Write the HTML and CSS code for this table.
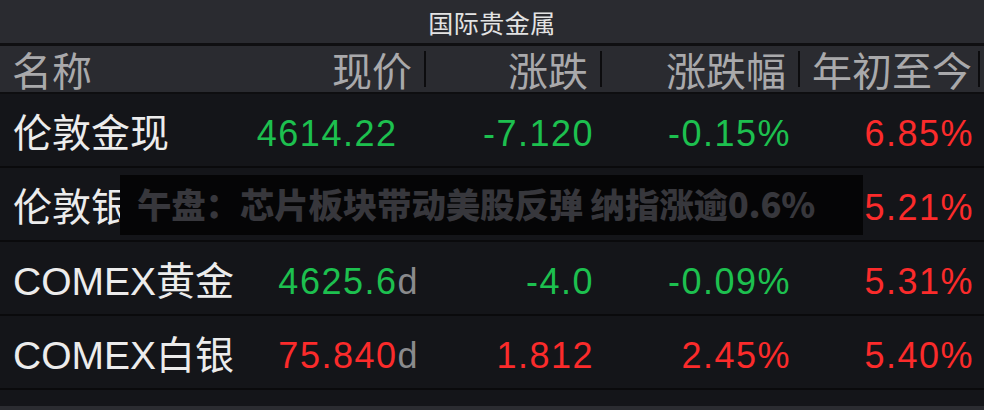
FILE: index.html
```html
<!DOCTYPE html>
<html lang="zh">
<head>
<meta charset="utf-8">
<link rel="stylesheet" href="styles.css">
</head>
<body>
<div class="board">
  <div class="title">国际贵金属</div>
  <div class="grid head">
    <div class="hcell name">名称</div>
    <div class="hcell num">现价</div>
    <div class="hcell num">涨跌</div>
    <div class="hcell num">涨跌幅</div>
    <div class="hcell last">年初至今</div>
  </div>
  <div class="grid row">
    <div class="cell name">伦敦金现</div>
    <div class="cell num c2 green">4614.22<span class="suffix hide">d</span></div>
    <div class="cell num c3 green">-7.120</div>
    <div class="cell num c4 green">-0.15%</div>
    <div class="cell num c5 red">6.85%</div>
  </div>
  <div class="grid row">
    <div class="cell name">伦敦银现</div>
    <div class="cell num c2"></div>
    <div class="cell num c3"></div>
    <div class="cell num c4"></div>
    <div class="cell num c5 red">5.21%</div>
  </div>
  <div class="grid row">
    <div class="cell name">COMEX黄金</div>
    <div class="cell num c2 green">4625.6<span class="suffix">d</span></div>
    <div class="cell num c3 green">-4.0</div>
    <div class="cell num c4 green">-0.09%</div>
    <div class="cell num c5 red">5.31%</div>
  </div>
  <div class="grid row">
    <div class="cell name">COMEX白银</div>
    <div class="cell num c2 red">75.840<span class="suffix">d</span></div>
    <div class="cell num c3 red">1.812</div>
    <div class="cell num c4 red">2.45%</div>
    <div class="cell num c5 red">5.40%</div>
  </div>
  <div class="filler"></div>
  <div class="bottom"></div>
  <div class="banner">午盘：芯片板块带动美股反弹 纳指涨逾0.6%</div>
</div>
</body>
</html>
```
FILE: styles.css
```css
html, body {
  margin: 0;
  padding: 0;
}
body {
  width: 984px;
  height: 410px;
  overflow: hidden;
  background: #141519;
  font-family: "Liberation Sans", "Noto Sans CJK SC", sans-serif;
}
.board {
  position: relative;
  width: 984px;
  height: 410px;
  display: flex;
  flex-direction: column;
}
.title {
  height: 43px;
  flex: none;
  background: #2a2b30;
  border-bottom: 3px solid #0f0f11;
  color: #e3e3e3;
  font-family: "Noto Sans CJK SC", sans-serif;
  font-size: 25px;
  display: flex;
  align-items: center;
  justify-content: center;
  letter-spacing: 0.5px;
}
.grid {
  display: grid;
  grid-template-columns: 240px 186px 176px 198px 180px 4px;
  flex: none;
}
.head {
  height: 46px;
  background: #2a2b30;
  border-bottom: 2px solid #0e0e10;
}
.hcell {
  font-family: "Noto Sans CJK SC", sans-serif;
  font-size: 40px;
  color: #a9a9ab;
  display: flex;
  align-items: center;
  line-height: 1;
}
.hcell.name {
  padding-left: 12px;
}
.hcell.num {
  justify-content: flex-end;
  padding-right: 12px;
  align-self: center;
  height: 36px;
  border-right: 2px solid #0c0c0e;
}
.hcell.last {
  padding-left: 12px;
  align-self: center;
  height: 36px;
  border-right: 2px solid #0c0c0e;
}
.row {
  height: 72px;
  border-bottom: 2px solid #0a0a0c;
  background: #141519;
}
.cell {
  display: flex;
  align-items: center;
  padding-top: 7px;
  box-sizing: border-box;
  line-height: 1;
}
.cell.name {
  padding-left: 13px;
  font-size: 39px;
  color: #ececec;
}
.cell.num {
  justify-content: flex-end;
  font-size: 36px;
  letter-spacing: 1.5px;
}
.c2 { padding-right: 7px; }
.c3 { padding-right: 8px; }
.c4 { padding-right: 9px; }
.c5 { padding-right: 6px; }
.green { color: #1dc04f; }
.red { color: #fb2b2b; }
.suffix { color: #8a8a8c; }
.hide { visibility: hidden; }
.filler {
  flex: 1;
  background: #141519;
}
.bottom {
  height: 4px;
  flex: none;
  background: #2b2c31;
}
.banner {
  position: absolute;
  left: 120px;
  top: 175px;
  width: 743px;
  height: 60px;
  box-sizing: border-box;
  padding-left: 17px;
  padding-bottom: 4px;
  background: #050506;
  color: #37373c;
  font-family: "Noto Sans CJK SC", sans-serif;
  font-weight: 900;
  font-size: 34.5px;
  letter-spacing: -0.2px;
  display: flex;
  align-items: center;
  white-space: nowrap;
}
```
